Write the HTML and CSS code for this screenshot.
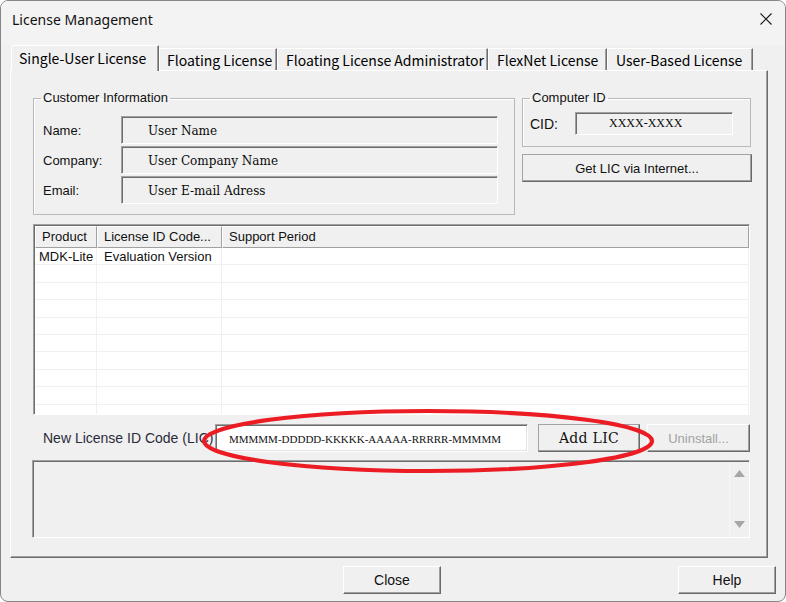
FILE: index.html
```html
<!DOCTYPE html>
<html lang="en">
<head>
<meta charset="utf-8">
<title>License Management</title>
<link rel="stylesheet" href="styles.css">
</head>
<body>
<div class="window">
  <div class="titlebar">
    <span class="title">License Management</span>
    <svg class="close-x" width="12" height="12" viewBox="0 0 12 12"><path d="M0.5 0.5 L11.5 11.5 M11.5 0.5 L0.5 11.5" stroke="#1a1a1a" stroke-width="1.1" fill="none"/></svg>
  </div>
  <div class="tabs">
    <div class="tab active t1">Single-User License</div>
    <div class="tab t2">Floating License</div>
    <div class="tab t3">Floating License Administrator</div>
    <div class="tab t4">FlexNet License</div>
    <div class="tab t5">User-Based License</div>
  </div>
  <div class="panel">
    <div class="top-row">
      <fieldset class="group customer">
        <legend>Customer Information</legend>
        <div class="frow"><span class="flabel">Name:</span><div class="field">User Name</div></div>
        <div class="frow"><span class="flabel">Company:</span><div class="field">User Company Name</div></div>
        <div class="frow"><span class="flabel">Email:</span><div class="field">User E-mail Adress</div></div>
      </fieldset>
      <div class="right-col">
        <fieldset class="group cid">
          <legend>Computer ID</legend>
          <div class="frow cidrow"><span class="cidlabel">CID:</span><div class="field cidfield">XXXX-XXXX</div></div>
        </fieldset>
        <div class="btn btn-gray getlic">Get LIC via Internet...</div>
      </div>
    </div>
    <div class="listview">
      <div class="lv-head">
        <div class="hc c1">Product</div>
        <div class="hc c2">License ID Code...</div>
        <div class="hc c3">Support Period</div>
      </div>
      <div class="lv-body">
        <div class="lv-row"><div class="rc c1">MDK-Lite</div><div class="rc c2">Evaluation Version</div><div class="rc c3"></div></div>
        <div class="lv-row"><div class="rc c1"></div><div class="rc c2"></div><div class="rc c3"></div></div>
        <div class="lv-row"><div class="rc c1"></div><div class="rc c2"></div><div class="rc c3"></div></div>
        <div class="lv-row"><div class="rc c1"></div><div class="rc c2"></div><div class="rc c3"></div></div>
        <div class="lv-row"><div class="rc c1"></div><div class="rc c2"></div><div class="rc c3"></div></div>
        <div class="lv-row"><div class="rc c1"></div><div class="rc c2"></div><div class="rc c3"></div></div>
        <div class="lv-row"><div class="rc c1"></div><div class="rc c2"></div><div class="rc c3"></div></div>
        <div class="lv-row"><div class="rc c1"></div><div class="rc c2"></div><div class="rc c3"></div></div>
        <div class="lv-row"><div class="rc c1"></div><div class="rc c2"></div><div class="rc c3"></div></div>
        <div class="lv-row"><div class="rc c1"></div><div class="rc c2"></div><div class="rc c3"></div></div>
      </div>
    </div>
    <div class="lic-row">
      <span class="lic-label">New License ID Code (LIC)</span>
      <div class="lic-input">MMMMM-DDDDD-KKKKK-AAAAA-RRRRR-MMMMM</div>
      <div class="btn btn-gray addlic">Add LIC</div>
      <div class="btn btn-light uninstall">Uninstall...</div>
      <svg class="mark" width="460" height="68" viewBox="0 0 460 68"><ellipse cx="227" cy="33" rx="224" ry="30" fill="none" stroke="#ec1c24" stroke-width="4.2"/></svg>
    </div>
    <div class="msgbox">
      <div class="msg-text"></div>
      <div class="vscroll">
        <svg width="11" height="7" viewBox="0 0 11 7"><path d="M5.5 0 L11 7 L0 7 Z" fill="#a6a6a6"/></svg>
        <svg width="11" height="7" viewBox="0 0 11 7"><path d="M0 0 L11 0 L5.5 7 Z" fill="#a6a6a6"/></svg>
      </div>
    </div>
  </div>
  <div class="footer">
    <div class="btn btn-light fbtn">Close</div>
    <div class="btn btn-light fbtn">Help</div>
  </div>
</div>
</body>
</html>
```
FILE: styles.css
```css
html, body {
  margin: 0;
  padding: 0;
  background: #ffffff;
}
body {
  font-family: "Liberation Sans", Arial, sans-serif;
  font-size: 13px;
  color: #000;
}
.window {
  width: 786px;
  height: 602px;
  box-sizing: border-box;
  border: 1px solid #868686;
  border-radius: 8px;
  background: #f0f0f0;
  overflow: hidden;
  display: flex;
  flex-direction: column;
}
.titlebar {
  height: 44px;
  flex: none;
  box-sizing: border-box;
  padding: 9px 13px 0 11px;
  display: flex;
  justify-content: space-between;
  align-items: flex-start;
  background: #f3f3f3;
}
.title {
  font-family: "Noto Sans", "Open Sans", sans-serif;
  font-size: 14px;
  line-height: 20px;
  color: #111;
}
.close-x {
  margin-top: 3px;
}
/* Tabs */
.tabs {
  display: flex;
  height: 25px;
  flex: none;
  margin-left: 10px;
  align-items: flex-end;
}
.tab {
  box-sizing: border-box;
  height: 22px;
  padding: 1px 0 0 7px;
  border-left: 1px solid #ffffff;
  border-top: 1px solid #ffffff;
  border-right: 1px solid #6d6d6d;
  box-shadow: inset -1px 0 0 #a0a0a0;
  font-family: "Noto Sans CJK JP", "Liberation Sans", sans-serif;
  font-size: 14px;
  line-height: 20px;
  color: #000;
  white-space: nowrap;
  background: #f0f0f0;
}
.tab.active {
  height: 26px;
  align-self: flex-start;
  position: relative;
  z-index: 1;
  padding-top: 2px;
  border-top-left-radius: 2px;
}
.t1 { width: 148px; }
.t2 { width: 118px; }
.t3 { width: 211px; padding-left: 8px; }
.t4 { width: 119px; padding-left: 8px; }
.t5 { width: 146px; padding-left: 8px; }

.panel {
  width: 758px;
  height: 488px;
  flex: none;
  margin-left: 9px;
  box-sizing: border-box;
  border-left: 1px solid #ffffff;
  border-top: 1px solid #ffffff;
  border-right: 1px solid #6d6d6d;
  border-bottom: 1px solid #6d6d6d;
  box-shadow: inset -1px -1px 0 #a0a0a0;
  padding: 19px 0 0 22px;
  display: flex;
  flex-direction: column;
}
.top-row {
  display: flex;
  gap: 7px;
  align-items: flex-start;
}
.group {
  margin: 0;
  box-sizing: border-box;
  border: 1px solid #b9b9b9;
  box-shadow: inset 1px 1px 0 #ffffff;
}
.group legend {
  padding: 0 2px;
  font-size: 13px;
  line-height: 16px;
  color: #111;
}
.customer {
  width: 482px;
  padding: 10px 16px 10px 9px;
}
.customer legend {
  margin-left: -2px;
}
.frow {
  display: flex;
  align-items: center;
  height: 28px;
}
.frow + .frow {
  margin-top: 2px;
}
.flabel {
  width: 78px;
  flex: none;
  color: #111;
}
.field {
  box-sizing: border-box;
  width: 377px;
  height: 28px;
  border-top: 1px solid #a0a0a0;
  border-left: 1px solid #a0a0a0;
  border-right: 1px solid #ffffff;
  border-bottom: 1px solid #ffffff;
  box-shadow: inset 1px 1px 0 #6d6d6d;
  background: #f0f0f0;
  padding: 1px 0 0 26px;
  font-family: "DejaVu Serif", "Liberation Serif", serif;
  font-size: 12px;
  line-height: 26px;
  color: #0a0a0a;
  white-space: nowrap;
}
.right-col {
  width: 230px;
  display: flex;
  flex-direction: column;
}
.cid {
  width: 229px;
  padding: 6px 17px 11px 7px;
}
.cidrow {
  height: 23px;
}
.cidlabel {
  width: 45px;
  flex: none;
  font-size: 14px;
  color: #111;
}
.cidfield {
  width: 158px;
  height: 23px;
  line-height: 21px;
  padding: 0 0 0 33px;
  font-family: "Liberation Serif", serif;
  font-size: 12px;
}
.btn {
  box-sizing: border-box;
  height: 28px;
  display: flex;
  align-items: center;
  justify-content: center;
  background: #f0f0f0;
  border-right: 1px solid #696969;
  border-bottom: 1px solid #696969;
  box-shadow: inset -1px -1px 0 #a0a0a0;
  white-space: nowrap;
}
.btn-gray {
  border-top: 1px solid #a3a3a3;
  border-left: 1px solid #a3a3a3;
}
.btn-light {
  border-top: 1px solid #ffffff;
  border-left: 1px solid #ffffff;
}
.getlic {
  margin-top: 7px;
  width: 230px;
  font-size: 13px;
  color: #111;
}
/* List view */
.listview {
  margin-top: 9px;
  width: 717px;
  height: 191px;
  box-sizing: border-box;
  border-top: 1px solid #a0a0a0;
  border-left: 1px solid #a0a0a0;
  border-right: 1px solid #ffffff;
  border-bottom: 1px solid #ffffff;
  box-shadow: inset 1px 1px 0 #6d6d6d;
  padding: 1px 0 0 1px;
  background: #ffffff;
  overflow: hidden;
  display: flex;
  flex-direction: column;
}
.lv-head {
  display: flex;
  height: 22px;
  flex: none;
  background: #f0f0f0;
}
.hc {
  box-sizing: border-box;
  height: 22px;
  border-top: 1px solid #ffffff;
  border-left: 1px solid #ffffff;
  border-right: 1px solid #a0a0a0;
  border-bottom: 1px solid #a0a0a0;
  padding-left: 6px;
  line-height: 19px;
  font-size: 13px;
  color: #111;
  white-space: nowrap;
}
.c1 { width: 62px; flex: none; }
.c2 { width: 125px; flex: none; }
.c3 { flex: 1; }
.lv-body {
  display: flex;
  flex-direction: column;
}
.lv-row {
  display: flex;
  height: 17.4px;
  flex: none;
  box-sizing: border-box;
  border-bottom: 1px solid #f0f0f0;
}
.rc {
  box-sizing: border-box;
  border-right: 1px solid #f0f0f0;
  padding-left: 7px;
  font-size: 13px;
  line-height: 17px;
  color: #111;
  white-space: nowrap;
}
.rc.c1 { padding-left: 4px; }
/* LIC row */
.lic-row {
  position: relative;
  margin-top: 9px;
  height: 28px;
  display: flex;
  align-items: center;
}
.lic-label {
  margin-left: 10px;
  width: 172px;
  flex: none;
  font-size: 14px;
  color: #2b2b3a;
  white-space: nowrap;
}
.lic-input {
  box-sizing: border-box;
  width: 313px;
  height: 28px;
  flex: none;
  margin-right: 10px;
  border-top: 1px solid #a0a0a0;
  border-left: 1px solid #a0a0a0;
  border-right: 1px solid #ffffff;
  border-bottom: 1px solid #ffffff;
  box-shadow: inset 1px 1px 0 #6d6d6d, inset -1px -1px 0 #e3e3e3;
  background: #ffffff;
  padding: 2px 0 0 13px;
  font-family: "Liberation Serif", serif;
  font-size: 11px;
  line-height: 24px;
  color: #111;
  white-space: nowrap;
}
.addlic {
  width: 102px;
  flex: none;
  margin-right: 7px;
  font-family: "DejaVu Serif", "Liberation Serif", serif;
  font-size: 14px;
  letter-spacing: 0.3px;
  color: #111;
}
.uninstall {
  width: 103px;
  flex: none;
  font-size: 13px;
  color: #a2a2a2;
}
.mark {
  position: absolute;
  left: 168px;
  top: -16px;
  pointer-events: none;
}
/* Message box */
.msgbox {
  margin-top: 8px;
  margin-left: -1px;
  width: 718px;
  height: 78px;
  box-sizing: border-box;
  border-top: 1px solid #a0a0a0;
  border-left: 1px solid #a0a0a0;
  border-right: 1px solid #ffffff;
  border-bottom: 1px solid #ffffff;
  box-shadow: inset 1px 1px 0 #6d6d6d;
  padding: 1px 0 0 1px;
  background: #f0f0f0;
  display: flex;
}
.msg-text {
  flex: 1;
}
.vscroll {
  width: 20px;
  box-sizing: border-box;
  border-left: 1px solid #f7f7f7;
  display: flex;
  flex-direction: column;
  align-items: center;
  justify-content: space-between;
  padding: 8px 0 9px 0;
}
/* Footer */
.footer {
  margin-top: 8px;
  margin-left: 342px;
  display: flex;
  gap: 237px;
}
.fbtn {
  width: 98px;
  font-size: 14px;
  color: #111;
}
```
